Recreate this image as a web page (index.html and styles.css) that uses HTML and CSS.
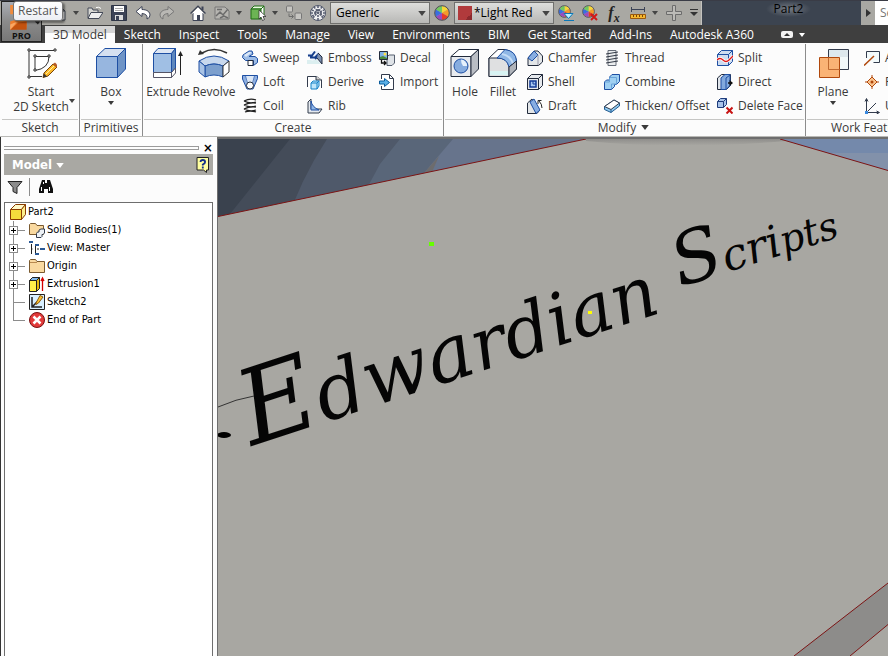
FILE: index.html
```html
<!doctype html>
<html lang="en">

<head>
  <meta charset="UTF-8">
  <title>Part2</title>
  <link rel="stylesheet" href="styles.css">
</head>

<body>
  <svg id="icons" aria-hidden="true">
    <defs>
      <!-- quick access bar -->
      <symbol id="i-new" viewBox="0 0 16 16"><path d="M3,2 h7 l4,4 v9 h-11 z M10,2 v4 h4" fill="#fff" stroke="#444a58"/></symbol>
      <symbol id="i-open" viewBox="0 0 16 16"><path d="M1,13 V3 h4 l1,2 h5 v2" fill="#d8d8d4" stroke="#444a58"/><path d="M1,13.5 L4,7.5 h12 l-4,6 z" fill="#eee" stroke="#444a58"/><path d="M9,2.500 q3,-1 5,1" fill="none" stroke="#fff"/></symbol>
      <symbol id="i-save" viewBox="0 0 16 16"><path d="M.5,.5 h15 v15 h-15 z" fill="#3c4356" stroke="#2d3444"/><path d="M3,1 h10 v6 h-10 z" fill="#fff"/><path d="M4,3.500 h8 M4,5.500 h8" stroke="#aaa"/><path d="M4,10 h8 v5 h-8 z" fill="#ddd"/><path d="M5,11 h3 v4 h-3 z" fill="#3c4356"/></symbol>
      <symbol id="i-undo" viewBox="0 0 16 16"><path d="M1,6.500 L7,1.500 V4.500 C12,4.500 15,7 15,10 Q15,13 12,14 Q13,9 7,8.500 V11.500 z" fill="#fff" stroke="#3c4356"/></symbol>
      <symbol id="i-redo" viewBox="0 0 16 16"><path d="M15,6.500 L9,1.500 V4.500 C4,4.500 1,7 1,10 Q1,13 4,14 Q3,9 9,8.500 V11.500 z" fill="#b9b8b4" stroke="#777"/></symbol>
      <symbol id="i-home" viewBox="0 0 16 16"><path d="M3,8 v7.500 h10 V8 L8,3 z" fill="#fff" stroke="#3c4356"/><path d="M.5,8.500 L8,1 L15.500,8.500" fill="none" stroke="#3c4356" stroke-width="1.200"/><path d="M2.500,8.500 L8,3 l5.500,5.500" fill="none" stroke="#fff"/><path d="M12.500,5 V1.500" stroke="#3c4356" stroke-width="2"/><path d="M7,10 h3 v5 h-3 z" fill="#3c4356"/></symbol>
      <symbol id="i-view" viewBox="0 0 16 16"><path d="M1,2 h10 l4,4 v8 h-14 z" fill="#b6b5b1" stroke="#777"/><path d="M2,11 l4,-4 3,3 5,-6 M3,4.500 h5 M6,13 l4,-2 4,2" fill="none" stroke="#6c6c6c" stroke-width="1.500"/></symbol>
      <symbol id="i-pick" viewBox="0 0 16 16"><path d="M1,4 l3,-3 h10 l-3,3 z" fill="#eafbe0" stroke="#1d6d12"/><path d="M1,4 h10 v10 h-10 z" fill="#6cb454" stroke="#1d6d12"/><path d="M11,4 l3,-3 v10 l-3,3 z" fill="#fff" stroke="#1d6d12"/><path d="M9,5 v9 l2,-2 1.500,3.500 2,-1 -1.500,-3 h3 z" fill="#fff" stroke="#333" stroke-width=".8"/></symbol>
      <symbol id="i-link" viewBox="0 0 16 16"><rect x=".5" y="1" width="6" height="6" rx="1" fill="#c6c5c1" stroke="#777"/><rect x="9" y="8" width="6.500" height="6.500" rx="1" fill="#c6c5c1" stroke="#777"/><path d="M3,8.500 v3 h4 M5.500,9.500 l2,2 -2,2" fill="none" stroke="#6c6c6c"/></symbol>
      <symbol id="i-sphere" viewBox="0 0 16 16"><circle cx="8" cy="8" r="7.500" fill="#f0f0f2" stroke="#4d5468"/><path d="M2,5 L14,11 M2,11 L14,5 M8,1 V15 M4,2 L13,13 M12,2 L3,13 M1,8 H15" stroke="#5a6073" stroke-width="1.600" stroke-dasharray="2 1"/></symbol>
      <symbol id="i-wheel" viewBox="0 0 16 16"><path d="M8,8 V1 A7,7 0 0,1 14,4.500z" fill="#f6d638"/><path d="M8,8 L14,4.500 A7,7 0 0,1 14,11.500z" fill="#f59a2a"/><path d="M8,8 L14,11.500 A7,7 0 0,1 8,15z" fill="#e63c28"/><path d="M8,8 V15 A7,7 0 0,1 2,11.500z" fill="#9a4ac0"/><path d="M8,8 L2,11.500 A7,7 0 0,1 2,4.500z" fill="#3a6ee0"/><path d="M8,8 L2,4.500 A7,7 0 0,1 8,1z" fill="#72c860"/><circle cx="8" cy="8" r="7.300" fill="none" stroke="#4d4d55"/></symbol>
      <symbol id="i-wheel-pick" viewBox="0 0 16 16"><use href="#i-wheel" width="13" height="13"/><path d="M6,8.500 h9 l-4.500,5 z" fill="#bdf0ff" stroke="#0b78b8"/><path d="M6,15.500 h10" stroke="#0b78b8"/></symbol>
      <symbol id="i-wheel-clear" viewBox="0 0 16 16"><use href="#i-wheel" width="13" height="13"/><path d="M9,9 l6,6 M15,9 l-6,6" stroke="#d01818" stroke-width="2"/></symbol>
      <symbol id="i-ruler" viewBox="0 0 16 16"><path d="M1,4.500 h14 M1.500,2 v5 M14.500,2 v5" stroke="#3c4356" stroke-width="1"/><path d="M.5,9.500 h15 v4 h-15 z" fill="#f6b930" stroke="#9a5a10"/><path d="M3.500,10 v2 M6.500,10 v2 M9.500,10 v2 M12.500,10 v2" stroke="#7a4408"/></symbol>
      <symbol id="i-plus" viewBox="0 0 16 16"><path d="M6.500,.5 h3 v6 h6 v3 h-6 v6 h-3 v-6 h-6 v-3 h6 z" fill="#bcbbb7" stroke="#6c6c6c"/></symbol>
      <symbol id="i-more" viewBox="0 0 8 10"><path d="M0,1.500 h8" stroke="#333"/><path d="M0,4 h8 l-4,4 z" fill="#333"/></symbol>
      <symbol id="i-drop" viewBox="0 0 6 4"><path d="M0,0 h6 l-3,4 z" fill="currentColor"/></symbol>

      <!-- large ribbon icons -->
      <symbol id="i-sketch" viewBox="0 0 32 32"><path d="M4,4 V29.500 H17 M4,3.500 H30" fill="none" stroke="#333" stroke-width="1"/><path d="M10,9.500 h14 q0,12 -14,14 z" fill="#fff" stroke="#333"/><path d="M3,2 h2 v2 h-2 z M29,2 h2 v2 h-2 z M3,29 h2 v2 h-2 z M9,8 h2 v2 h-2 z M23,8 h2 v2 h-2 z M9,22 h2 v2 h-2 z" fill="#fff" stroke="#333"/><path d="M19,26 L28,17 l4,3 -9,9 -5,1.500 z" fill="#fbb829" stroke="#7a4408"/><path d="M21,27 l8,-8" stroke="#fff0a0"/><path d="M28,17 l2,-1.500 3,3 -1.500,2 z" fill="#b55a28"/><path d="M18,30.500 l1,-4 3,3 z" fill="#333"/></symbol>
      <symbol id="i-box" viewBox="0 0 32 32"><path d="M1.500,9.500 L10,1.500 H30.500 L22.500,9.500 z" fill="#d5e0f0" stroke="#1e4fa3"/><path d="M1.500,9.500 h21 v21 h-21 z" fill="#97b6df" stroke="#1e4fa3"/><path d="M22.500,9.500 L30.500,1.500 V22 L22.500,30.500 z" fill="#6f94c6" stroke="#1e4fa3"/></symbol>
      <symbol id="i-extrude" viewBox="0 0 32 32"><path d="M1.500,6.500 L6,1.500 H23.500 L19.500,6.500 z" fill="#dde6f3" stroke="#1e4fa3"/><path d="M1.500,6.500 h18 v19 h-18 z" fill="#a0bfe4" stroke="#1e4fa3"/><path d="M19.500,6.500 L23.500,1.500 V21 l-4,4.500 z" fill="#5e87bd" stroke="#1e4fa3"/><path d="M1.500,25.500 h18 v5 h-18 z M19.500,25.500 l4,-4.500 v5 l-4,4.500 z" fill="#fff" stroke="#556"/><path d="M28.500,28 V8 " stroke="#222"/><path d="M26,9 l2.500,-5 2.500,5 z" fill="#222"/></symbol>
      <symbol id="i-revolve" viewBox="0 0 32 32"><path d="M4,6 Q16,-1 29,6" fill="none" stroke="#333" stroke-width="1.500"/><path d="M0,8 l2,-5 4,4 z" fill="#333"/><path d="M1,14 Q16,4 31,14 L25,19 Q16,15 7,19 z" fill="#c8d8ed" stroke="#1e4fa3"/><path d="M7,19 Q16,15 25,19 V30 Q16,26 7,30 z" fill="#7c9fcd" stroke="#1e4fa3"/><path d="M1,14 l6,5 v11 l-6,-5 z" fill="#a9c3e5" stroke="#1e4fa3"/><path d="M31,14 l-6,5 v11 l6,-5 z" fill="#fff" stroke="#333"/></symbol>
      <symbol id="i-hole" viewBox="0 0 32 32"><path d="M2,9.500 L10,2.500 H29.500 L22,9.500 z" fill="#fff" stroke="#222b3c"/><path d="M2,9.500 h20 v20 h-20 z" fill="#e8ebef" stroke="#222b3c"/><path d="M22,9.500 l7.500,-7 V22 L22,29.500 z" fill="#b9bdc4" stroke="#222b3c"/><circle cx="12" cy="19" r="7" fill="#86acdf" stroke="#1e4fa3"/><path d="M12,12.500 a6.500,6.500 0 0,1 6,6.500 h-4 q-2,-2 -2,-6.500" fill="#e6f1fc"/></symbol>
      <symbol id="i-fillet" viewBox="0 0 32 32"><path d="M2,11 L11,2.500 H18 Q28,4 29.500,14 V22 L22,29.500 H2 z" fill="#fff" stroke="#222b3c"/><path d="M2,11 H10 Q21,11 22,20 V29.500 H2 z" fill="#dfe0e1" stroke="#222b3c"/><path d="M10,11 L18,2.500 Q29,4 29.500,14 L22,20 Q20,11 10,11 z" fill="#8fb7e6" stroke="#1e4fa3"/><path d="M15,7 q9,2 11,10" fill="none" stroke="#c4dcf6" stroke-width="2"/><path d="M22,20 l7.500,-6 V22 L22,29.500 z" fill="#b0b4bb" stroke="#222b3c"/><path d="M3,24 h18 v4 h-18 z" fill="#d8f3f3"/></symbol>
      <symbol id="i-plane" viewBox="0 0 32 32"><path d="M11.500,2.500 h20 v20 h-20 z" fill="#f1f8f9" stroke="#333c4d"/><path d="M12,3 h19 v7 h-19 z" fill="#dde8ed"/><path d="M2.500,10.500 h20 v20 h-20 z" fill="#f9ab66" fill-opacity=".9" stroke="#b0480c"/><path d="M11.500,10.500 v12 h11" fill="none" stroke="#c06a30"/></symbol>

      <!-- small ribbon icons -->
      <symbol id="i-sweep" viewBox="0 0 16 16"><path d="M1,5 L7,1 h3 l1,3 -4,2.500 h6 l2.500,2 v4 l-4,3 v-5 h-8 l-3,-3 z" fill="#9dbce6" stroke="#1e4fa3"/><path d="M2,5 L7,2 h2 v1 l-5,4 z" fill="#dbe7f6"/><path d="M6,10.500 h5 v5 h-5 z" fill="#fff" stroke="#222b3c"/></symbol>
      <symbol id="i-loft" viewBox="0 0 16 16"><path d="M.5,1.500 h15 v3 L11,15 H5 L.5,5 z" fill="#8daee0" stroke="#1e4fa3"/><path d="M4,2 h8 l-1,8 h-6 z" fill="#dbe7f6"/><path d="M3.500,2 l2,7 M12.500,2 l-2,7" stroke="#5a82c4"/><circle cx="8" cy="11.500" r="3.500" fill="#fff" stroke="#222b3c"/></symbol>
      <symbol id="i-coil" viewBox="0 0 16 16"><path d="M2,3 Q8,0 14,2 M2,3 Q8,6 14,4 M2,7 Q8,4 14,5 M2,7 Q8,10 14,8 M2,11 Q8,8 14,9 M2,11 Q8,14 14,12 M3,14 Q8,12 14,14" fill="none" stroke="#222" stroke-width="1.300"/></symbol>
      <symbol id="i-emboss" viewBox="0 0 16 16"><path d="M0,10 h10 l5,4 h-15 z" fill="#dceff0"/><path d="M0,5 L4,1 h7 l4,5 v9 l-6,-6 -4,2 z" fill="#eef3fa"/><path d="M1,5.500 h4 l3,-4 M3,7.500 h5 l4,-4 M8,9 l2,-2 h2" fill="none" stroke="#153d8a" stroke-width="2"/><path d="M10,8 l5,6 V7 l-4,-4" fill="#7c8fb0" stroke="#222b3c"/></symbol>
      <symbol id="i-derive" viewBox="0 0 16 16"><path d="M.5,13 V2.500 h9 l5,3.500 V14" fill="#fff" stroke="#333c4d"/><path d="M9,2 v4 h6" fill="#ccc" stroke="#333c4d"/><path d="M4,9 l2,-2 h6 v5 l-2,3 h-6 z" fill="#bfe6fa" stroke="#1482c8"/><path d="M4,9 h6 v6 M10,9 l2,-2" fill="none" stroke="#1482c8"/></symbol>
      <symbol id="i-rib" viewBox="0 0 16 16"><path d="M1,4 L4,1 V11 l11,0 -3,4 H1 z" fill="#e4e9ef" stroke="#333c4d"/><path d="M4,3 q1,6 8,9 h-8 z" fill="#8fb7e6" stroke="#1e4fa3"/></symbol>
      <symbol id="i-decal" viewBox="0 0 16 16"><path d="M8,7 l2,-2 h5.500 v8 l-2.500,2.500 h-5 z" fill="#dfe3e7" stroke="#555e6e"/><path d="M.5,1.500 h8 v8 h-8 z" fill="#7fb2e8" stroke="#222b3c"/><path d="M1,7 l3,-1 4,2 v1 h-7 z" fill="#4d8a3a"/><circle cx="6" cy="4" r="1.500" fill="#ffe14a"/><path d="M2.500,10 v3 h4 M5,11 l2,2 -2,2" fill="none" stroke="#111" stroke-width="1.300"/></symbol>
      <symbol id="i-import" viewBox="0 0 16 16"><path d="M2.500,5 V.5 h8 l4,4 v11 h-12 V12" fill="#fff" stroke="#333c4d"/><path d="M10.500,.5 v4 h4" fill="none" stroke="#333c4d"/><path d="M.5,7 h5 V4.500 l5,4 -5,4 V10 h-5 z" fill="#5bb1e8" stroke="#0b5c9c"/></symbol>
      <symbol id="i-chamfer" viewBox="0 0 16 16"><path d="M1,8 L7,1 l4,0 4.500,5 v6 l-4,3.500 h-10.500 z" fill="#e3e6e8" stroke="#222b3c"/><path d="M1,8 L7,1 l4,4 -6,6 z" fill="#88aee2" stroke="#1e4fa3"/><path d="M11,5 v10" stroke="#99a"/></symbol>
      <symbol id="i-shell" viewBox="0 0 16 16"><path d="M.5,4.500 l4,-4 h11 v11 l-4,4 h-11 z" fill="#e6e9ed" stroke="#222b3c"/><path d="M.5,4.500 h11 v11 M11.500,4.500 l4,-4" fill="none" stroke="#222b3c"/><path d="M3,7 h6 v6 h-6 z" fill="#a8c8f2" stroke="#123a96" stroke-width="1.500"/><path d="M6,7 v3 h3" fill="none" stroke="#123a96"/></symbol>
      <symbol id="i-draft" viewBox="0 0 16 16"><path d="M.5,5 L5,1 l7,12 -2,2.500 h-9.500 z" fill="#e3e6e8" stroke="#222b3c"/><path d="M3,4 L7,1 l6,11 -4,3.500 z" fill="#88aee2" stroke="#1e4fa3"/><path d="M15,10 Q15,6 12,3 M11,6 V2.500 h3.500" fill="none" stroke="#222"/></symbol>
      <symbol id="i-thread" viewBox="0 0 16 16"><path d="M4,.5 h8 v15 h-8 z" fill="#eceeef" stroke="#666d78"/><path d="M2,4 L14,2 M2,7 L14,5 M2,10 L14,8 M2,13 L14,11" stroke="#333a46"/></symbol>
      <symbol id="i-combine" viewBox="0 0 16 16"><path d="M.5,8 l2,-2 h3 V3 l2.500,-2.500 h7.500 v7 l-3,3 h-2 v2 l-3,3 h-7 z" fill="#9fd0f2" stroke="#1e4fa3"/><path d="M.5,8 h5 v-4.500 h7 v7 M7.500,15 v-5 h5" fill="none" stroke="#6aa4d8"/></symbol>
      <symbol id="i-thicken" viewBox="0 0 16 16"><path d="M.5,8.500 L10,2 l5.500,3 v3 L7,14.500 l-6.500,-3 z" fill="#8fcaf0" stroke="#225b90"/><path d="M.5,8.500 L10,2 l5.500,3 -8.500,6.500 z" fill="#fff" stroke="#333c4d"/><path d="M7,11.500 v3" stroke="#225b90"/></symbol>
      <symbol id="i-split" viewBox="0 0 16 16"><path d="M.5,4.500 l4,-4 h11 v11 l-4,4 h-11 z" fill="#cddcf0" stroke="#1e4fa3"/><path d="M.5,4.500 h11 v11 M11.500,4.500 l4,-4" fill="none" stroke="#1e4fa3"/><path d="M0,10 q3,-3 6,0 t6,0 l4,-4" fill="none" stroke="#fff" stroke-width="3"/><path d="M0,10 q3,-3 6,0 t6,0 l4,-4" fill="none" stroke="#e01818" stroke-width="1.300"/></symbol>
      <symbol id="i-direct" viewBox="0 0 16 16"><path d="M.5,4 l4,-3.500 h9 v11 l-4,4 h-9 z" fill="#dfe4ea" stroke="#222b3c"/><path d="M4,4 l4,-3.500 h5 v11 l-4,4 h-5 z" fill="#82a9dd" stroke="#1e4fa3"/><path d="M9,4 v11 M9,4 l4,-3" stroke="#1e4fa3"/><path d="M11,9 h4" stroke="#111" stroke-width="1.500"/><path d="M12.500,6 l3.500,3 -3.500,3 z" fill="#111"/></symbol>
      <symbol id="i-delete-face" viewBox="0 0 16 16"><path d="M.5,3.500 l3,-3 h6 v6 l-3,3 h-6 z" fill="#a9c4ea" stroke="#1e3c7c"/><path d="M.5,3.500 h6 v6 M6.500,3.500 l3,-3" fill="none" stroke="#1e3c7c"/><path d="M9.500,9.500 l6,6 M15.500,9.500 l-6,6" stroke="#c81414" stroke-width="2"/></symbol>
      <symbol id="i-axis" viewBox="0 0 16 16"><path d="M2.500,8 V1.500 h13 v11 h-6" fill="#f3fafb" stroke="#333c4d"/><path d="M0,15.500 L10,6" stroke="#b0480c" stroke-width="1.500"/></symbol>
      <symbol id="i-point" viewBox="0 0 16 16"><path d="M8,1 V15 M1,8 H15" stroke="#b0480c"/><path d="M3,8 L8,3 l5,5 -5,5 z" fill="#fbc38d" stroke="#b0480c"/><circle cx="8" cy="8" r="1.500" fill="#b0480c"/></symbol>
      <symbol id="i-ucs" viewBox="0 0 16 16"><path d="M2.500,14.500 V1 M1,3.500 L2.500,.5 L4,3.500 M2.500,14.500 H15 M12.500,13 l3,1.500 -3,1.500 M2.500,14.500 L12,5" fill="none" stroke="#333c4d"/><path d="M1,13 h3 v3 h-3 z" fill="#3a8ae0"/></symbol>

      <!-- model browser -->
      <symbol id="i-filter" viewBox="0 0 16 16"><path d="M1,2.500 h14 l-5,6 v6 l-4,-2 v-4 z" fill="#8c8c8c" stroke="#222"/></symbol>
      <symbol id="i-find" viewBox="0 0 16 16"><path d="M4,1 h3 v3 h2 V1 h3 l3,9 v4 h-5 v-4 h-4 v4 h-5 v-4 z" fill="#111"/><path d="M3.500,8 v4 M11.500,8 v4 M5.500,3 v2" stroke="#fff"/></symbol>
      <symbol id="i-help" viewBox="0 0 14 16"><path d="M1,.5 h11.500 v12.500 h-2 v2.500 l-3,-2.500 H1 z" fill="#ffffa0" stroke="#222"/><path d="M4.500,5 q0,-2 2.300,-2 t2.300,2 q0,1.500 -2.300,2.500 v1 M6.800,9.500 v2" fill="none" stroke="#13308a" stroke-width="1.800"/></symbol>
      <symbol id="i-part" viewBox="0 0 16 16"><path d="M.5,5.500 l5,-5 h10 l-4,5 z" fill="#fff9c8" stroke="#8a3c00"/><path d="M.5,5.500 h11 v10 h-11 z" fill="#f5dc3c" stroke="#8a3c00"/><path d="M11.500,5.500 l4,-5 v10 l-4,5 z" fill="#fbee8c" stroke="#8a3c00"/></symbol>
      <symbol id="i-folder" viewBox="0 0 16 16"><path d="M.5,14.500 V2.500 l1,-1 h5 l1.500,2 h7.500 v11 z" fill="#f9d9a0" stroke="#7a5a30"/><path d="M1,4.500 h7" stroke="#b98a50"/></symbol>
      <symbol id="i-bodies" viewBox="0 0 16 16"><path d="M.5,12.500 V2.500 l1,-1 h5 l1.500,2 h6.500 v9 z" fill="#f9d9a0" stroke="#7a5a30"/><path d="M10,8 l2,-1 h3.500 v4 l-1.500,1.500 h-1 v2 l-1,1 h-4.500 v-4 l1,-1.500 h1.500 z" fill="#eef2f6" stroke="#333c4d"/></symbol>
      <symbol id="i-views" viewBox="0 0 16 16"><path d="M2.500,4 V14 M2.500,9 h1 M9,5.500 h-2.500 v8 h2 M8,9 h2" fill="none" stroke="#222"/><path d="M0,1 h4 v2 h-4 z M6,4 h4 v2 h-4 z M11,8 h5 v2 h-5 z M6,13 h4 v2 h-4 z" fill="#2b5a96"/></symbol>
      <symbol id="i-extrusion" viewBox="0 0 16 16"><path d="M.5,4.500 l3,-3 h7 v11 l-3,3 h-7 z" fill="#e6b90a" stroke="#222"/><path d="M1,5 h6 v10 h-6 z" fill="#fff04a"/><path d="M.5,4.500 l3,-3 h7 l-3,3 z" fill="#7fb6ea" stroke="#222"/><path d="M7.500,4.500 v11" stroke="#222"/><path d="M13.500,15 V3 M12,5 l1.500,-3 1.500,3" fill="none" stroke="#d40000" stroke-width="1.300"/></symbol>
      <symbol id="i-sketch-node" viewBox="0 0 16 16"><path d="M.5,.5 h15 v15 h-15 z" fill="#d8efff" stroke="#222"/><path d="M3,3 v10 h10 M3,13 L9,7" fill="none" stroke="#222" stroke-width="1.500"/><path d="M7,9 L11,1.500 l3,1.500 -4.500,6 -2.500,1.500 z" fill="#fbc02d" stroke="#8a5a10"/></symbol>
      <symbol id="i-end" viewBox="0 0 16 16"><circle cx="8" cy="8" r="7.500" fill="#e23a3a" stroke="#7a1010"/><path d="M4.500,4.500 l7,7 M11.500,4.500 l-7,7" stroke="#fff" stroke-width="2.500"/></symbol>
    </defs>
  </svg>

  <header class="titlebar">
    <div class="quick-access">
      <button class="tool" aria-label="New"><svg><use href="#i-new"/></svg></button>
      <button class="drop" aria-label="New options"><svg><use href="#i-drop"/></svg></button>
      <button class="tool" aria-label="Open"><svg><use href="#i-open"/></svg></button>
      <button class="tool" aria-label="Save"><svg><use href="#i-save"/></svg></button>
      <button class="tool" aria-label="Undo"><svg><use href="#i-undo"/></svg></button>
      <button class="tool" aria-label="Redo"><svg><use href="#i-redo"/></svg></button>
      <button class="tool spaced" aria-label="Home"><svg><use href="#i-home"/></svg></button>
      <button class="tool" aria-label="Return"><svg><use href="#i-view"/></svg></button>
      <button class="drop" aria-label="Return options"><svg><use href="#i-drop"/></svg></button>
      <button class="tool" aria-label="Select"><svg><use href="#i-pick"/></svg></button>
      <button class="drop" aria-label="Select options"><svg><use href="#i-drop"/></svg></button>
      <button class="tool" aria-label="Update"><svg><use href="#i-link"/></svg></button>
      <button class="tool" aria-label="Material"><svg><use href="#i-sphere"/></svg></button>
      <div class="field">
        <select aria-label="Material name"><option>Generic</option></select>
        <svg class="field-arrow"><use href="#i-drop"/></svg>
      </div>
      <button class="tool" aria-label="Appearance"><svg><use href="#i-wheel"/></svg></button>
      <div class="field">
        <span class="swatch"></span>
        <select aria-label="Appearance name"><option>*Light Red</option></select>
        <svg class="field-arrow"><use href="#i-drop"/></svg>
      </div>
      <button class="tool" aria-label="Adjust"><svg><use href="#i-wheel-pick"/></svg></button>
      <button class="tool" aria-label="Clear"><svg><use href="#i-wheel-clear"/></svg></button>
      <button class="tool fx" aria-label="Parameters"><i>f</i><sub>x</sub></button>
      <button class="tool" aria-label="Measure"><svg><use href="#i-ruler"/></svg></button>
      <button class="drop" aria-label="Measure options"><svg><use href="#i-drop"/></svg></button>
      <button class="tool" aria-label="Add"><svg><use href="#i-plus"/></svg></button>
      <button class="more" aria-label="Customize"><svg><use href="#i-more"/></svg></button>
    </div>
    <h1 class="doc-title"><span>Part2</span></h1>
    <form class="search">
      <button type="button" class="search-toggle" aria-label="Collapse search"></button>
      <input type="text" aria-label="Search" placeholder="Search">
    </form>
  </header>

  <button class="app-button">
    <svg viewBox="0 0 38 28" aria-hidden="true">
      <path d="M8,3 h14 l-8,9 h-6 z" fill="#f08a3c"/>
      <path d="M8,19 l9,-3 7,3 v6 l-16,2 z" fill="#ee7d2c"/>
      <path d="M8,27 l8,-7 8,-1 v8 z" fill="#c4520f"/>
      <path d="M8,22 l7,-3 -7,8 z" fill="#f9a765"/>
      <path d="M32,19 h5 l-2,3 z" fill="#222"/>
    </svg>
    <span>PRO</span>
  </button>
  <div class="tooltip" role="tooltip">Restart</div>

  <nav class="tabs">
    <a class="active" href="#model">3D Model</a>
    <a href="#sketch">Sketch</a>
    <a href="#inspect">Inspect</a>
    <a href="#tools">Tools</a>
    <a href="#manage">Manage</a>
    <a href="#view">View</a>
    <a href="#environments">Environments</a>
    <a href="#bim">BIM</a>
    <a href="#start">Get Started</a>
    <a href="#addins">Add-Ins</a>
    <a href="#a360">Autodesk A360</a>
    <button class="minimize" aria-label="Minimize ribbon"></button>
    <button class="drop" aria-label="Ribbon options"><svg><use href="#i-drop"/></svg></button>
  </nav>

  <div class="ribbon">
    <section class="panel panel-sketch">
      <div class="panel-body">
        <button class="large"><svg><use href="#i-sketch"/></svg>Start<br>2D Sketch</button>
        <button class="drop side" aria-label="Sketch options"><svg><use href="#i-drop"/></svg></button>
      </div>
      <h2>Sketch</h2>
    </section>

    <section class="panel panel-primitives">
      <div class="panel-body">
        <button class="large"><svg><use href="#i-box"/></svg>Box<svg class="under"><use href="#i-drop"/></svg></button>
      </div>
      <h2>Primitives</h2>
    </section>

    <section class="panel panel-create">
      <div class="panel-body">
        <button class="large"><svg><use href="#i-extrude"/></svg>Extrude</button>
        <button class="large"><svg><use href="#i-revolve"/></svg>Revolve</button>
        <div class="commands">
          <button><svg><use href="#i-sweep"/></svg>Sweep</button>
          <button><svg><use href="#i-loft"/></svg>Loft</button>
          <button><svg><use href="#i-coil"/></svg>Coil</button>
          <button><svg><use href="#i-emboss"/></svg>Emboss</button>
          <button><svg><use href="#i-derive"/></svg>Derive</button>
          <button><svg><use href="#i-rib"/></svg>Rib</button>
          <button><svg><use href="#i-decal"/></svg>Decal</button>
          <button><svg><use href="#i-import"/></svg>Import</button>
        </div>
      </div>
      <h2>Create</h2>
    </section>

    <section class="panel panel-modify">
      <div class="panel-body">
        <button class="large"><svg><use href="#i-hole"/></svg>Hole</button>
        <button class="large"><svg><use href="#i-fillet"/></svg>Fillet</button>
        <div class="commands">
          <button><svg><use href="#i-chamfer"/></svg>Chamfer</button>
          <button><svg><use href="#i-shell"/></svg>Shell</button>
          <button><svg><use href="#i-draft"/></svg>Draft</button>
          <button><svg><use href="#i-thread"/></svg>Thread</button>
          <button><svg><use href="#i-combine"/></svg>Combine</button>
          <button><svg><use href="#i-thicken"/></svg>Thicken/ Offset</button>
          <button><svg><use href="#i-split"/></svg>Split</button>
          <button><svg><use href="#i-direct"/></svg>Direct</button>
          <button><svg><use href="#i-delete-face"/></svg>Delete Face</button>
        </div>
      </div>
      <h2>Modify <svg class="title-arrow"><use href="#i-drop"/></svg></h2>
    </section>

    <section class="panel panel-work">
      <div class="panel-body">
        <button class="large"><svg><use href="#i-plane"/></svg>Plane<svg class="under"><use href="#i-drop"/></svg></button>
        <div class="commands">
          <button><svg><use href="#i-axis"/></svg>Axis</button>
          <button><svg><use href="#i-point"/></svg>Point</button>
          <button><svg><use href="#i-ucs"/></svg>UCS</button>
        </div>
      </div>
      <h2>Work Features</h2>
    </section>
  </div>

  <div class="workspace">
    <aside class="browser">
      <div class="grip"><span></span><button aria-label="Close">×</button></div>
      <header class="browser-head">
        <button class="browser-title">Model <svg><use href="#i-drop"/></svg></button>
        <button class="help" aria-label="Help"><svg><use href="#i-help"/></svg></button>
      </header>
      <div class="browser-tools">
        <button class="tool" aria-label="Filter"><svg><use href="#i-filter"/></svg></button>
        <button class="tool" aria-label="Find"><svg><use href="#i-find"/></svg></button>
      </div>
      <div class="tree">
        <p><svg><use href="#i-part"/></svg>Part2</p>
        <ul>
          <li><button aria-label="Expand"></button><svg><use href="#i-bodies"/></svg>Solid Bodies(1)</li>
          <li><button aria-label="Expand"></button><svg><use href="#i-views"/></svg>View: Master</li>
          <li><button aria-label="Expand"></button><svg><use href="#i-folder"/></svg>Origin</li>
          <li><button aria-label="Expand"></button><svg><use href="#i-extrusion"/></svg>Extrusion1</li>
          <li><svg><use href="#i-sketch-node"/></svg>Sketch2</li>
          <li><svg><use href="#i-end"/></svg>End of Part</li>
        </ul>
      </div>
    </aside>

    <main class="viewport">
      <svg viewBox="218 139 670 517" preserveAspectRatio="xMinYMin slice">
        <defs>
          <linearGradient id="far" x1="0" y1="0" x2="0" y2="1">
            <stop offset="0" stop-color="#8f8e8b"/>
            <stop offset="1" stop-color="#a8a7a2"/>
          </linearGradient>
          <path id="baseline" d="M252,446 L724,292"/>
          <path id="baseline2" d="M680,287 L884,223"/>
        </defs>

        <!-- sky, in bands from dark to light -->
        <path d="M218,139 h670 v90 h-670 z" fill="#3a424e"/>
        <path d="M290,139 H888 V229 H218 Z" fill="#444c59"/>
        <path d="M327,139 H888 V229 H284 Q300,180 327,139 Z" fill="#4f596a"/>
        <path d="M400,139 H888 V229 H340 L366,190 L380,164 Z" fill="#596679"/>
        <path d="M453,139 H888 V229 H400 L424,173 Z" fill="#67748c"/>
        <path d="M424,173 L439,156 L432,172 Z" fill="#6d6c6d"/>
        <path d="M780,139 H888 V172 Z" fill="#7489ab"/>
        <path d="M830,153 L888,153 V172 Z" fill="#8291aa"/>

        <!-- top and side faces of the part -->
        <path d="M218,216.500 L586,139 H780 L888,170.500 V656 H218 z" fill="#a8a7a2"/>
        <path d="M586,139 H780 L786,141 Q680,150 586,141 z" fill="url(#far)"/>
        <path d="M888,583 V656 H794 z" fill="#8d8c8a"/>
        <path d="M888,624.500 V656 H850 z" fill="#a8a7a2"/>
        <path d="M218,216.500 L586,139 M780,139 L888,170.500 M794,656 L888,583 M850,656 L888,624.500" fill="none" stroke="#7c1414"/>

        <!-- engraved lettering, receding to the right -->
        <text class="lettering"><textPath href="#baseline"><tspan class="s1">E</tspan><tspan class="s2">dwa</tspan><tspan class="s3">rdian</tspan></textPath></text>
        <text class="lettering"><textPath href="#baseline2"><tspan class="s4">S</tspan><tspan class="s5">cri</tspan><tspan class="s6">pts</tspan></textPath></text>

        <!-- ornament running in from the left edge -->
        <path class="flourish" d="M218,407 Q236,399 254,396"/>
        <ellipse cx="224" cy="435" rx="7" ry="3"/>

        <path d="M429,242 h5 v4 h-5 z" fill="#66ff00"/>
        <path d="M588,311 h4 v3 h-4 z" fill="#ffff00"/>
      </svg>
    </main>
  </div>
</body>
</html>
```

FILE: styles.css
```css
* {
  box-sizing: border-box;
  padding: 0;
  margin: 0;
}

body {
  position: relative;
  display: flex;
  flex-direction: column;
  height: 100vh;
  overflow: hidden;
  font-family: "Open Sans", "Noto Sans", sans-serif;
  font-size: 12px;
  line-height: 16px;
  color: #3a3a3a;
  background-color: #fcfcfc;
}

#icons {
  display: none;
}

button {
  border: none;
  background: none;
  font: inherit;
  color: inherit;
  cursor: pointer;
}

button svg {
  display: block;
}

/* title bar */
.titlebar {
  display: flex;
  flex: none;
  height: 26px;
  background-color: #3c4450;
  border-top: 1px solid #3a3c46;
  border-bottom: 1px solid #3f3f3f;
}

.quick-access {
  display: flex;
  align-items: center;
  gap: 8px;
  padding-left: 51px;
  padding-right: 3px;
  background-color: #a9a8a3;
  border-right: 1px solid #c4c3bf;
  flex: none;
}

.tool,
.tool svg {
  flex: none;
  width: 16px;
  height: 16px;
}

.tool.spaced {
  margin-left: 7px;
}

.drop,
.drop svg {
  flex: none;
  width: 6px;
  height: 4px;
}

.drop {
  margin-left: -2px;
  color: #444;
}

.more,
.more svg {
  width: 8px;
  height: 10px;
}

.fx {
  font-family: "Liberation Serif", serif;
  font-size: 16px;
  font-style: italic;
  font-weight: bold;
  line-height: 14px;
  color: #222;
}

.fx sub {
  font-size: 12px;
  line-height: 0;
}

.field {
  display: flex;
  align-items: center;
  gap: 2px;
  width: 100px;
  height: 22px;
  margin: 0 -4px;
  padding: 0 3px;
  border: 1px solid #70706e;
  background: linear-gradient(#dededc, #b8b8b6);
}

.field select {
  flex: 1;
  min-width: 0;
  appearance: none;
  border: none;
  background: none;
  font: inherit;
  color: #000;
}

.field select:first-child {
  padding-left: 2px;
}

.field-arrow {
  flex: none;
  width: 8px;
  height: 5px;
  color: #444;
}

.swatch {
  width: 14px;
  height: 14px;
  background: linear-gradient(135deg, #b13a3c 75%, #8c2a2e 75%);
}

.doc-title {
  flex: 1;
  font-size: 12px;
  font-weight: normal;
  text-align: center;
  color: #000;
}

.doc-title span {
  display: inline-block;
  margin-left: 14px;
  padding: 0 8px;
  background: radial-gradient(closest-side, #757b84, #3c4450);
}

.search {
  display: flex;
  flex: none;
  width: 27px;
  background-color: #a9a8a3;
  overflow: hidden;
}

.search-toggle {
  flex: none;
  width: 14px;
}

.search-toggle::before {
  content: "";
  display: block;
  margin-left: 5px;
  border: 4px solid transparent;
  border-left: 5px solid #333;
  border-right: none;
}

.search input {
  width: 120px;
  flex: none;
  padding-left: 5px;
  border: none;
  font: inherit;
}

.app-button {
  position: absolute;
  left: 1px;
  top: 1px;
  width: 41px;
  height: 41px;
  border: 1px solid #222;
  background: linear-gradient(#a9adb5, #8b8b8b 50%, #777);
  font-size: 9px;
  font-weight: bold;
  line-height: 10px;
  color: #111;
}

.tooltip {
  position: absolute;
  left: 13px;
  top: 1px;
  padding: 1px 4px;
  border: 1px solid #767676;
  border-radius: 3px;
  background: linear-gradient(#fff, #eceef4);
  box-shadow: 2px 2px 2px rgba(0, 0, 0, 0.4);
  color: #575757;
}

/* ribbon tabs */
.tabs {
  display: flex;
  align-items: center;
  flex: none;
  height: 17px;
  padding-left: 45px;
  background-color: #3f3f3f;
  white-space: nowrap;
}

.tabs a {
  padding: 0 9px;
  line-height: 17px;
  color: #fff;
  text-decoration: none;
}

.tabs a.active {
  padding: 0 8px;
  background: linear-gradient(#d4d4d4 40%, #fcfcfc 40%);
  color: #3a3a3a;
}

.minimize {
  width: 12px;
  height: 7px;
  margin: 0 8px 0 18px;
  border-radius: 2px;
  background-color: #f2f2f2;
}

.minimize::before {
  content: "";
  display: block;
  width: 0;
  margin: 0 auto;
  border: 3px solid transparent;
  border-bottom-color: #333;
  border-top: none;
}

.tabs .drop {
  color: #fff;
}

/* ribbon */
.ribbon {
  display: flex;
  flex: none;
  height: 94px;
  padding: 1px 0 0 1px;
  border-bottom: 1px solid #b9b9b6;
  background-color: #fcfcfc;
  overflow: hidden;
}

.panel {
  display: flex;
  flex-direction: column;
  flex: none;
  border-right: 1px solid #8c8c8c;
}

.panel-sketch {
  width: 79px;
}

.panel-primitives {
  width: 63px;
}

.panel-create {
  width: 301px;
}

.panel-modify {
  width: 362px;
}

.panel-work {
  width: 132px;
}

.panel-body {
  display: flex;
  flex: 1;
  justify-content: center;
}

.panel-create .panel-body,
.panel-modify .panel-body,
.panel-work .panel-body {
  justify-content: flex-start;
  padding-left: 2px;
}

.panel-work .panel-body {
  padding-left: 8px;
}

.panel h2 {
  height: 17px;
  margin: 0 1px;
  border-top: 1px solid #c6c6c4;
  font-size: 12px;
  font-weight: normal;
  text-align: center;
  white-space: nowrap;
}

.title-arrow {
  width: 8px;
  height: 5px;
  margin: 2px;
}

.large {
  display: flex;
  flex-direction: column;
  align-items: center;
  align-self: flex-start;
  min-width: 38px;
  padding-top: 3px;
  line-height: 15px;
  white-space: nowrap;
}

.large svg {
  width: 32px;
  height: 32px;
  margin-bottom: 5px;
}

.large svg.under {
  width: 6px;
  height: 4px;
  margin-top: 2px;
}

.panel-sketch .panel-body {
  padding-left: 8px;
}

.drop.side {
  align-self: flex-end;
  margin: 0 0 16px;
}

.panel-create .large {
  width: 46px;
}

.commands {
  display: grid;
  grid-template-rows: repeat(3, 24px);
  grid-auto-flow: column;
  grid-auto-columns: max-content;
  margin-top: 2px;
}

.panel-create .commands {
  grid-template-columns: 65px 72px;
  margin-left: 5px;
}

.panel-modify .commands {
  grid-template-columns: 77px 113px;
  margin-left: 5px;
}

.panel-work .commands {
  margin-left: 12px;
}

.commands button {
  display: flex;
  align-items: center;
  gap: 5px;
  white-space: nowrap;
}

.commands svg {
  flex: none;
  width: 16px;
  height: 16px;
}

/* workspace */
.workspace {
  display: flex;
  flex: 1;
  min-height: 0;
}

.browser {
  display: flex;
  flex-direction: column;
  flex: none;
  width: 217px;
  padding: 4px 4px 0 3px;
  border-left: 1px solid #333;
  font-family: "DejaVu Sans Condensed", "DejaVu Sans", sans-serif;
  font-size: 11px;
  color: #000;
}

.grip {
  display: flex;
  align-items: center;
  gap: 4px;
  height: 13px;
}

.grip span {
  flex: 1;
  height: 4px;
  border: 1px solid #9a9a9a;
  border-left: none;
}

.grip button {
  width: 10px;
  font-size: 13px;
  font-weight: bold;
  line-height: 12px;
}

.browser-head {
  display: flex;
  justify-content: space-between;
  align-items: center;
  height: 21px;
  padding: 0 3px 0 8px;
  background-color: #a9a8a3;
}

.browser-title {
  font-size: 13px;
  font-weight: bold;
  color: #fff;
}

.browser-title svg {
  display: inline-block;
  width: 8px;
  height: 5px;
  vertical-align: middle;
}

.help,
.help svg {
  width: 14px;
  height: 16px;
}

.browser-tools {
  display: flex;
  align-items: center;
  height: 27px;
  padding: 0 3px 3px;
}

.browser-tools .tool:first-child {
  width: 23px;
  height: 18px;
  margin-right: 8px;
  border-right: 1px solid #8c8c8c;
}

.tree {
  flex: 1;
  border: 1px solid #6e6e6e;
  border-bottom: none;
  background-color: #fff;
}

.tree svg {
  flex: none;
  width: 16px;
  height: 16px;
}

.tree p,
.tree li {
  display: flex;
  align-items: center;
  gap: 2px;
  height: 18px;
}

.tree p {
  padding-left: 5px;
}

/* branch lines: trunk, then twig */
.tree li {
  padding-left: 24px;
  background:
    linear-gradient(#8c8c8c, #8c8c8c) 8px 0 / 1px 18px no-repeat,
    linear-gradient(#8c8c8c, #8c8c8c) 8px 9px / 12px 1px no-repeat;
}

.tree li:last-child {
  background-size: 1px 9px, 12px 1px;
}

.tree ul {
  list-style: none;
}

.tree li button {
  width: 9px;
  height: 9px;
  margin: 0 9px 0 -20px;
  border: 1px solid #8c8c8c;
  background:
    linear-gradient(#000, #000) center / 5px 1px no-repeat,
    linear-gradient(#000, #000) center / 1px 5px no-repeat,
    #fff;
}

.viewport {
  flex: 1;
  min-width: 0;
  border-top: 2px solid #6e6e6e;
  border-left: 1px solid #6e6e6e;
  background-color: #a8a7a2;
}

.viewport svg {
  display: block;
  width: 100%;
  height: 100%;
}

.lettering {
  font-family: "DejaVu Serif", "Liberation Serif", serif;
  font-style: italic;
  fill: #050505;
}

.flourish {
  fill: none;
  stroke: #333;
}

.s1 { font-size: 104px; }
.s2 { font-size: 78px; }
.s3 { font-size: 72px; }
.s4 { font-size: 72px; }
.s5 { font-size: 44px; }
.s6 { font-size: 38px; }
```
